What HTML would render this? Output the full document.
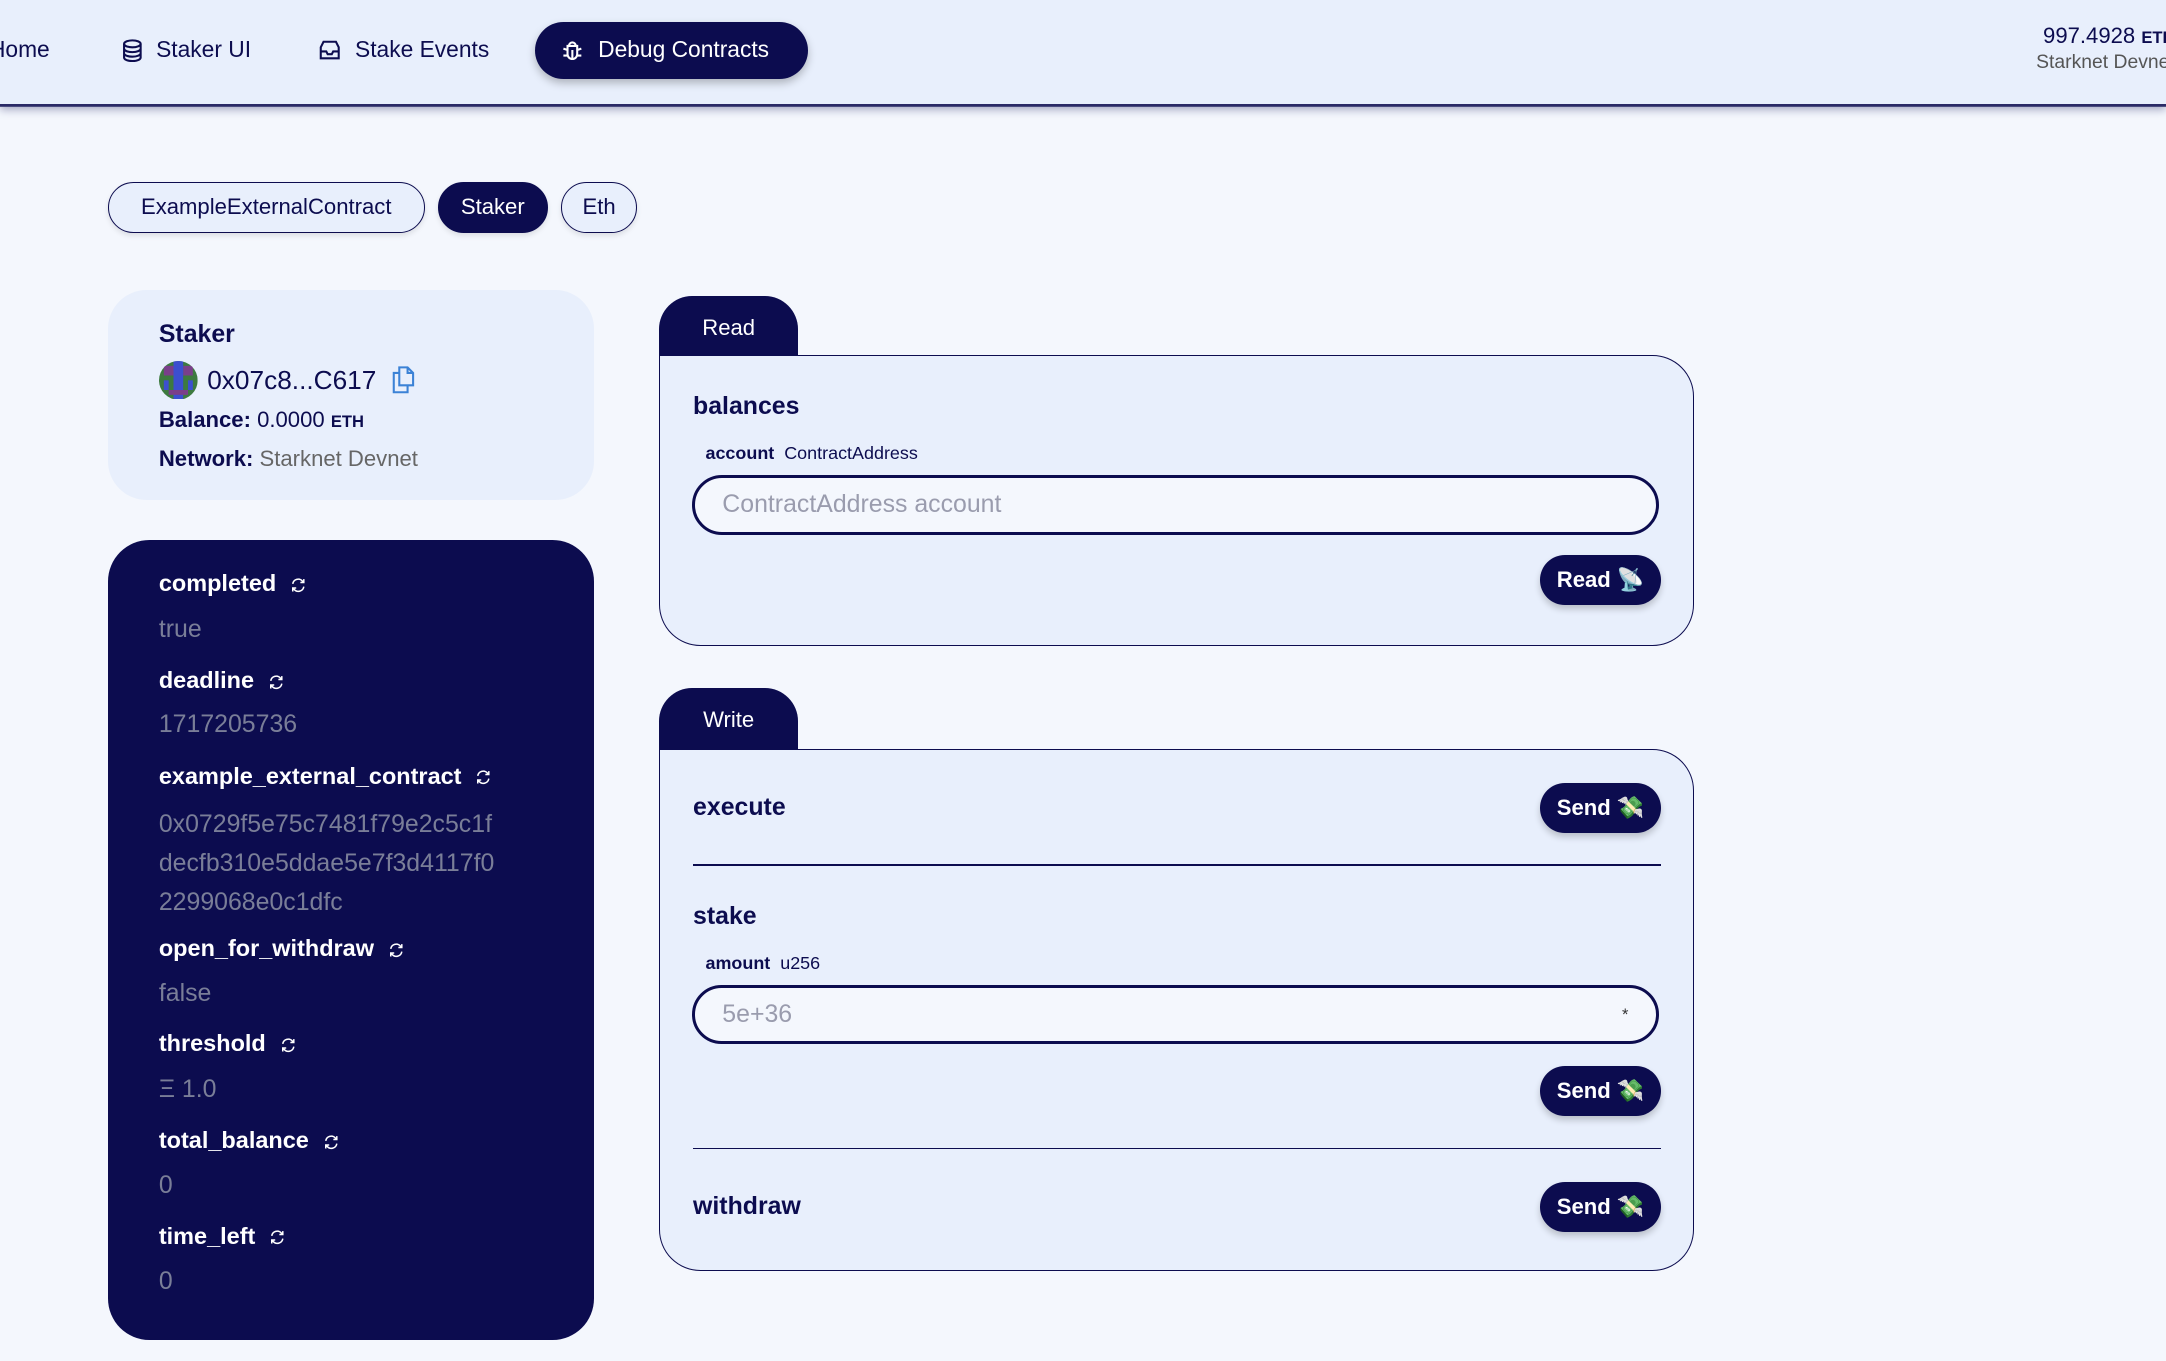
<!DOCTYPE html>
<html><head><meta charset="utf-8"><style>
html{zoom:1.38138}
body{margin:0;width:1568px;height:985px;overflow:hidden;background:#f4f7fd;font-family:"Liberation Sans",sans-serif;color:#0c0c4f;position:relative}
.a{position:absolute;white-space:nowrap}
.hdr{position:absolute;left:0;top:0;width:1568px;height:75px;background:#e8effc;box-shadow:0 2px 0 #2a2a66,0 4px 6px rgba(12,12,79,.35)}
.nav{font-size:16.5px;top:26px}
.pill{position:absolute;border:1px solid #0c0c4f;border-radius:20px;background:#e8effc;font-size:16px;height:35px;line-height:35px;text-align:center;box-shadow:0 2px 4px rgba(0,0,0,.1)}
.dk{background:#0c0c4f;color:#fff}
.lbl{font-weight:bold;font-size:17px;color:#fff;left:37px}
.val{font-size:18px;color:#7a7e98;left:37px}
.ref{display:inline-block;margin-left:10px;vertical-align:middle;width:12px;height:12px}
.box{position:absolute;left:477px;width:748px;border:1px solid #0c0c4f;border-radius:30px;border-top-left-radius:0;background:#e8effc}
.tab{position:absolute;left:477px;width:101px;height:44px;background:#0c0c4f;color:#fff;border-radius:24px 24px 0 0;font-size:16px;text-align:center;line-height:46px}
.fn{font-weight:bold;font-size:18px;left:24px}
.btn{position:absolute;left:637px;width:88px;height:36px;border-radius:18px;background:#0c0c4f;color:#fff;font-weight:bold;font-size:16px;line-height:36px;text-align:center;box-shadow:0 3px 5px rgba(0,0,0,.2)}
.inp{position:absolute;left:23px;width:696px;height:39px;border:2.5px solid #0c0c4f;border-radius:22px;background:#f4f7fd;font-size:18px;color:#9a9cae;line-height:39px;text-indent:20px}
.hr{position:absolute;left:24px;width:701px;height:1px;background:#0c0c4f}
</style></head><body>
<svg width="0" height="0" style="position:absolute"><defs><symbol id="r" viewBox="0 0 12 12"><path d="M2 5a4 4 0 017-2l1 1M10 7a4 4 0 01-7 2L2 8M10 1.5V4H7.5M2 10.5V8h2.5" fill="none" stroke="#fff" stroke-width="1.1"/></symbol></defs></svg>
<div class="hdr">
<div class="a nav" style="left:-8px">Home</div>
<svg class="a" style="left:88px;top:28px" width="15" height="17" viewBox="0 0 15 17" fill="none" stroke="#0c0c4f" stroke-width="1.5"><ellipse cx="7.5" cy="3.5" rx="6" ry="2.5"/><path d="M1.5 3.5v10c0 1.4 2.7 2.5 6 2.5s6-1.1 6-2.5v-10M1.5 7c0 1.4 2.7 2.5 6 2.5s6-1.1 6-2.5M1.5 10.3c0 1.4 2.7 2.5 6 2.5s6-1.1 6-2.5"/></svg>
<div class="a nav" style="left:113px">Staker UI</div>
<svg class="a" style="left:230px;top:28px" width="17" height="16" viewBox="0 0 17 16" fill="none" stroke="#0c0c4f" stroke-width="1.5"><path d="M2 6l2-4h9l2 4v8H2z M2 9h4l1 2h3l1-2h4"/></svg>
<div class="a nav" style="left:257px">Stake Events</div>
<div class="a dk" style="left:387px;top:16px;width:198px;height:41px;border-radius:21px;box-shadow:0 3px 6px rgba(0,0,0,.25)"></div>
<svg class="a" style="left:407px;top:28px" width="15" height="17" viewBox="0 0 15 17" fill="none" stroke="#fff" stroke-width="1.5"><path d="M4 5h7v6a3.5 3.5 0 01-7 0z M5 5a2.5 2.5 0 015 0 M1 7l3 1 M14 7l-3 1 M1 12h3 M14 12h-3 M7.5 8v7"/></svg>
<div class="a nav" style="left:433px;color:#fff">Debug Contracts</div>
<div class="a" style="left:1479px;top:17px;font-size:16px">997.4928 <b style="font-size:12px">ETH</b></div>
<div class="a" style="left:1474px;top:38px;font-size:14px;color:#555">Starknet Devnet</div>
</div>

<div class="pill" style="left:78px;top:132px;width:228px">ExampleExternalContract</div>
<div class="pill dk" style="left:317px;top:132px;width:78px">Staker</div>
<div class="pill" style="left:406px;top:132px;width:54px">Eth</div>

<div class="a" style="left:78px;top:210px;width:352px;height:152px;background:#e8effc;border-radius:28px">
<div class="a" style="left:37px;top:22px;font-weight:bold;font-size:18px">Staker</div>
<svg class="a" style="left:37px;top:51px" width="28" height="28" viewBox="0 0 8 8"><defs><clipPath id="c"><circle cx="4" cy="4" r="4"/></clipPath></defs><g clip-path="url(#c)"><rect width="8" height="8" fill="#3d7a3f"/><rect x="1" y="1" width="2" height="2" fill="#7a3f8a"/><rect x="5" y="1" width="2" height="2" fill="#7a3f8a"/><rect x="3" y="0" width="2" height="8" fill="#3c4fd0"/><rect x="1" y="4" width="1" height="2" fill="#3c4fd0"/><rect x="6" y="4" width="1" height="2" fill="#3c4fd0"/><rect x="2" y="6" width="4" height="1" fill="#7a3f8a"/></g></svg>
<div class="a" style="left:72px;top:54px;font-size:19px">0x07c8...C617</div>
<svg class="a" style="left:205px;top:55px" width="18" height="20" viewBox="0 0 18 20" fill="none" stroke="#3b82d6" stroke-width="1.5"><path d="M6 1h6l4 4v9H6z M12 1v4h4 M6 5H2v14h10v-5"/></svg>
<div class="a" style="left:37px;top:85px;font-size:16px"><b>Balance:</b> 0.0000 <b style="font-size:12px">ETH</b></div>
<div class="a" style="left:37px;top:113px;font-size:16px"><b>Network:</b> <span style="color:#666">Starknet Devnet</span></div>
</div>

<div class="a" style="left:78px;top:391px;width:352px;height:579px;background:#0c0c4f;border-radius:30px">
<div class="a lbl" style="top:22px">completed<svg class="ref"><use href="#r"/></svg></div>
<div class="a val" style="top:54px">true</div>
<div class="a lbl" style="top:92px">deadline<svg class="ref"><use href="#r"/></svg></div>
<div class="a val" style="top:123px">1717205736</div>
<div class="a lbl" style="top:161px">example_external_contract<svg class="ref"><use href="#r"/></svg></div>
<div class="a val" style="top:192px;line-height:28px">0x0729f5e75c7481f79e2c5c1f<br>decfb310e5ddae5e7f3d4117f0<br>2299068e0c1dfc</div>
<div class="a lbl" style="top:286px">open_for_withdraw<svg class="ref"><use href="#r"/></svg></div>
<div class="a val" style="top:318px">false</div>
<div class="a lbl" style="top:355px">threshold<svg class="ref"><use href="#r"/></svg></div>
<div class="a val" style="top:387px">Ξ 1.0</div>
<div class="a lbl" style="top:425px">total_balance<svg class="ref"><use href="#r"/></svg></div>
<div class="a val" style="top:457px">0</div>
<div class="a lbl" style="top:494px">time_left<svg class="ref"><use href="#r"/></svg></div>
<div class="a val" style="top:526px">0</div>
</div>

<div class="tab" style="top:214px">Read</div>
<div class="box" style="top:257px;height:209px">
<div class="a fn" style="top:26px">balances</div>
<div class="a" style="left:33px;top:63px;font-size:13px"><b>account</b>&nbsp; ContractAddress</div>
<div class="inp" style="top:86px">ContractAddress account</div>
<div class="btn" style="top:144px">Read 📡</div>
</div>

<div class="tab" style="top:498px">Write</div>
<div class="box" style="top:542px;height:377px">
<div class="a fn" style="top:31px">execute</div>
<div class="btn" style="top:24px">Send 💸</div>
<div class="hr" style="top:83px"></div>
<div class="a fn" style="top:110px">stake</div>
<div class="a" style="left:33px;top:147px;font-size:13px"><b>amount</b>&nbsp; u256</div>
<div class="inp" style="top:170px">5e+36<span style="position:absolute;right:20px;color:#333;font-size:12px">*</span></div>
<div class="btn" style="top:229px">Send 💸</div>
<div class="hr" style="top:288px"></div>
<div class="a fn" style="top:320px">withdraw</div>
<div class="btn" style="top:313px">Send 💸</div>
</div>
</body></html>
